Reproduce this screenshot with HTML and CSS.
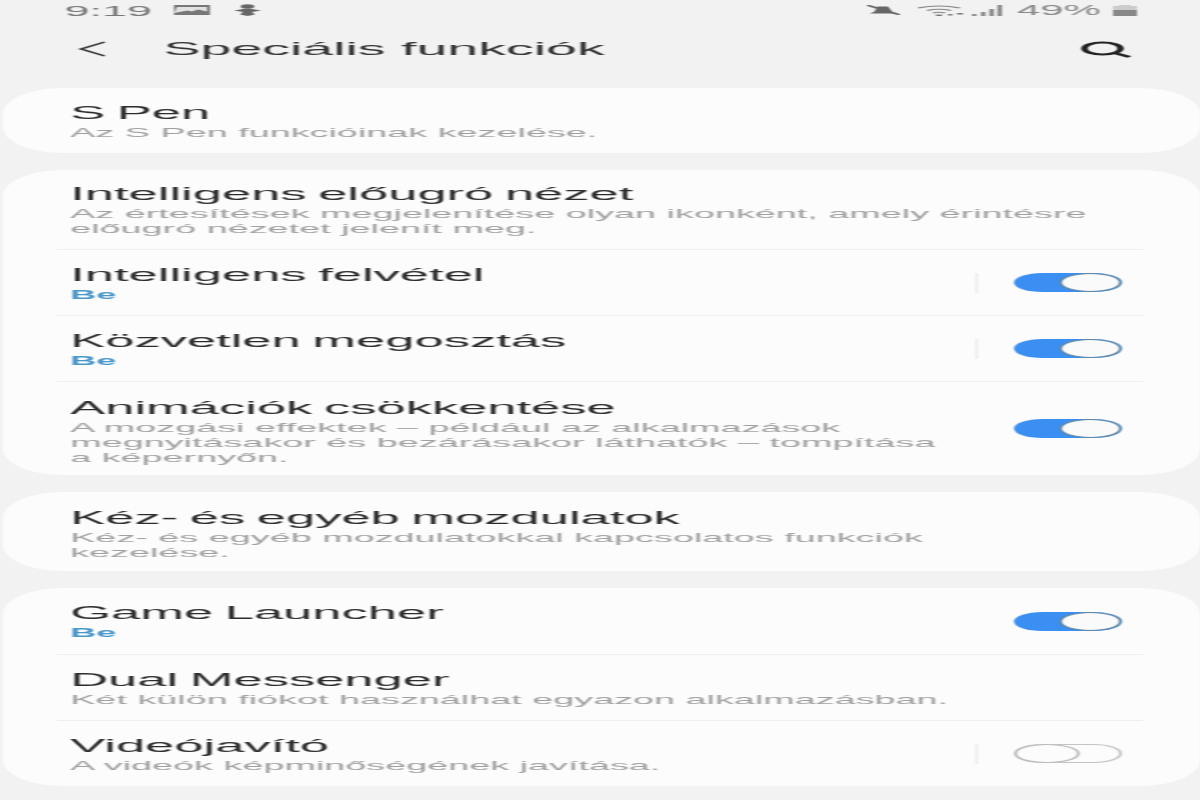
FILE: index.html
```html
<!DOCTYPE html>
<html lang="hu">

<head>
    <meta charset="UTF-8">
    <meta name="viewport" content="width=device-width, initial-scale=1">
    <title>Speciális funkciók</title>
    <link rel="stylesheet" href="styles.css">
</head>

<body>
    <div class="phone">
        <div class="status">
            <span class="clock">9:19</span>
            <svg class="ic-image" viewBox="0 0 12 10" preserveAspectRatio="none">
                <path d="M0 0h12v10H0z" fill="#777" />
                <path d="M1 2h10v4.500l-3-2-2 2-1.500-1-4.500 2.500z" fill="#e2e2e2" />
            </svg>
            <svg class="ic-person" viewBox="0 0 9 12" preserveAspectRatio="none">
                <circle cx="4.5" cy="2.500" r="2.300" fill="#666" />
                <path d="M0 6.500L3 5h3l3 1.500L6 8l1 2.500-2.500 1.500L2 10.500 3 8z" fill="#666" />
            </svg>
            <div class="status-right">
                <svg class="ic-mute" viewBox="0 0 11 10" preserveAspectRatio="none">
                    <path d="M3.500 1.500h3.500l1.500 5.500 2 1.500H1l1.500-2z" fill="#666" />
                    <path d="M0 0l11 10" stroke="#666" stroke-width="1.300" />
                </svg>
                <svg class="ic-wifi" viewBox="0 0 15 11" preserveAspectRatio="none">
                    <path d="M0 3q7-4 14 0M3 5.500q4-2.500 8 0M5 8q2-1.500 4 0" fill="none" stroke="#888" stroke-width="1.100" />
                    <path d="M6 9.500h2v1.500H6zM10 9h1.500v1.500H10zM13 8h2v1.500h-2z" fill="#777" />
                </svg>
                <svg class="ic-signal" viewBox="0 0 10 11" preserveAspectRatio="none">
                    <path d="M0 9h1.500v2H0zM3 7h1.500v4H3zM5.800 4h1.500v7H5.800zM8.500 0H10v11H8.500z" fill="#888" />
                </svg>
                <span class="battery-text">49%</span>
                <svg class="ic-battery" viewBox="0 0 8 11" preserveAspectRatio="none">
                    <path d="M2 0h4v1H2zM0 1h8v10H0z" fill="#ccc" />
                    <path d="M0 5h8v6H0z" fill="#888" />
                </svg>
            </div>
        </div>

        <div class="topbar">
            <svg class="ic-back" viewBox="0 0 9 16" preserveAspectRatio="none">
                <path d="M9 1L1 8l8 7" fill="none" stroke="#333" stroke-width="1.300" />
            </svg>
            <h1>Speciális funkciók</h1>
            <svg class="ic-search" viewBox="0 0 17 17" preserveAspectRatio="none">
                <ellipse cx="7.500" cy="7.500" rx="6" ry="6" fill="none" stroke="#222" stroke-width="2.200" />
                <path d="M11.500 12l5 4" stroke="#222" stroke-width="2.200" />
            </svg>
        </div>

        <div class="list">
            <div class="card">
                <div class="row s-pen">
                    <div class="text">
                        <div class="name">S Pen</div>
                        <div class="sub">Az S Pen funkcióinak kezelése.</div>
                    </div>
                </div>
            </div>

            <div class="card">
                <div class="row r-popup">
                    <div class="text">
                        <div class="name">Intelligens előugró nézet</div>
                        <div class="sub">Az értesítések megjelenítése olyan ikonként, amely érintésre előugró nézetet jelenít meg.</div>
                    </div>
                </div>
                <div class="row r-short">
                    <div class="text">
                        <div class="name">Intelligens felvétel</div>
                        <div class="sub on">Be</div>
                    </div>
                    <span class="sep"></span>
                    <span class="toggle"></span>
                </div>
                <div class="row r-short">
                    <div class="text">
                        <div class="name">Közvetlen megosztás</div>
                        <div class="sub on">Be</div>
                    </div>
                    <span class="sep"></span>
                    <span class="toggle"></span>
                </div>
                <div class="row r-anim">
                    <div class="text narrow">
                        <div class="name">Animációk csökkentése</div>
                        <div class="sub">A mozgási effektek – például az alkalmazások megnyitásakor és bezárásakor láthatók – tompítása a képernyőn.</div>
                    </div>
                    <span class="toggle"></span>
                </div>
            </div>

            <div class="card">
                <div class="row r-gesture">
                    <div class="text wrapped">
                        <div class="name">Kéz- és egyéb mozdulatok</div>
                        <div class="sub">Kéz- és egyéb mozdulatokkal kapcsolatos funkciók kezelése.</div>
                    </div>
                </div>
            </div>

            <div class="card">
                <div class="row r-short">
                    <div class="text">
                        <div class="name">Game Launcher</div>
                        <div class="sub on">Be</div>
                    </div>
                    <span class="toggle"></span>
                </div>
                <div class="row r-short">
                    <div class="text">
                        <div class="name">Dual Messenger</div>
                        <div class="sub">Két külön fiókot használhat egyazon alkalmazásban.</div>
                    </div>
                </div>
                <div class="row r-short">
                    <div class="text">
                        <div class="name">Videójavító</div>
                        <div class="sub">A videók képminőségének javítása.</div>
                    </div>
                    <span class="sep"></span>
                    <span class="toggle off"></span>
                </div>
            </div>
        </div>
    </div>
</body>

</html>
```

FILE: styles.css
```css
/* The screenshot is a phone screen stretched sideways, so lay out at 400 wide and stretch */
html,
body {
    margin: 0;
    height: 100%;
    overflow: hidden;
    background: #f2f2f2;
}

.phone {
    width: 400px;
    height: 800px;
    transform: scaleX(3);
    transform-origin: 0 0;
    filter: blur(0.4px);
    font-family: "Liberation Sans", Arial, sans-serif;
}

/* Status bar */
.status {
    display: flex;
    align-items: center;
    height: 22px;
    padding: 0 21px 2px 21.500px;
    box-sizing: border-box;
    color: #777;
}

.clock {
    font-size: 15px;
    width: 36px;
}

.status-right {
    display: flex;
    align-items: center;
    margin-left: auto;
    color: #888;
}

.battery-text {
    font-size: 14px;
    margin: 0 4px 0 5px;
}

.ic-image {
    width: 12px;
    height: 10px;
}

.ic-person {
    width: 9px;
    height: 12px;
    margin-left: 8px;
}

.ic-mute {
    width: 11px;
    height: 10px;
}

.ic-wifi {
    width: 15px;
    height: 11px;
    margin-left: 6px;
}

.ic-signal {
    width: 10px;
    height: 11px;
    margin-left: 3px;
}

.ic-battery {
    width: 8px;
    height: 11px;
}

/* Top bar */
.topbar {
    display: flex;
    align-items: center;
    height: 54px;
    padding: 0 23px 0 26px;
    box-sizing: border-box;
}

.topbar h1 {
    margin: 0 0 0 19.500px;
    font-size: 18.500px;
    font-weight: normal;
    color: #333;
}

.ic-back {
    width: 9px;
    height: 16px;
}

.ic-search {
    width: 17px;
    height: 17px;
    margin-left: auto;
}

/* Cards */
.list {
    display: flex;
    flex-direction: column;
    gap: 17px;
    margin-top: 12px;
}

.card {
    background: #fcfcfc;
    border-radius: 20px / 26px;
    margin: 0 0.500px;
    padding: 0 18.500px;
}

.row {
    display: flex;
    align-items: center;
    padding: 0 7px 0 4.400px;
    border-top: 1px solid #efefef;
    box-sizing: border-box;
}

.row:first-child {
    border-top: 0;
}

.s-pen {
    height: 65px;
}

.r-popup {
    height: 79px;
}

.r-short {
    height: 66px;
}

.r-anim {
    height: 94px;
}

.r-gesture {
    height: 79px;
}

.text {
    flex: 1;
    min-width: 0;
    padding-top: 2px;
}

.narrow {
    padding: 6px 20px 0 0;
}

.wrapped {
    padding: 6px 60px 0 0;
}

.name {
    font-size: 17.500px;
    line-height: 20px;
    word-spacing: -1px;
    color: #2c2c2c;
}

.sub {
    font-size: 12.600px;
    line-height: 15px;
    margin-top: 3px;
    color: #a0a0a0;
}

.sub.on {
    font-size: 12px;
    color: #4a97c8;
    font-weight: bold;
}

/* Switches */
.sep {
    width: 1px;
    height: 20px;
    background: #eee;
    margin-right: 12px;
}

.toggle {
    display: block;
    width: 36px;
    height: 19px;
    border-radius: 10px;
    background: #3b8ff3;
    position: relative;
    flex-shrink: 0;
}

.toggle::after {
    content: "";
    position: absolute;
    right: 0;
    top: 0;
    width: 21px;
    height: 19px;
    box-sizing: border-box;
    border-radius: 50%;
    border: 1px solid #5f87a3;
    background: #fafafa;
}

.toggle.off {
    background: #fcfcfc;
    box-sizing: border-box;
    border: 1px solid #c4c4c4;
}

.toggle.off::after {
    left: -1.500px;
    right: auto;
    top: -1px;
    width: 22px;
    border-color: #bbb;
    background: #fcfcfc;
}
```
